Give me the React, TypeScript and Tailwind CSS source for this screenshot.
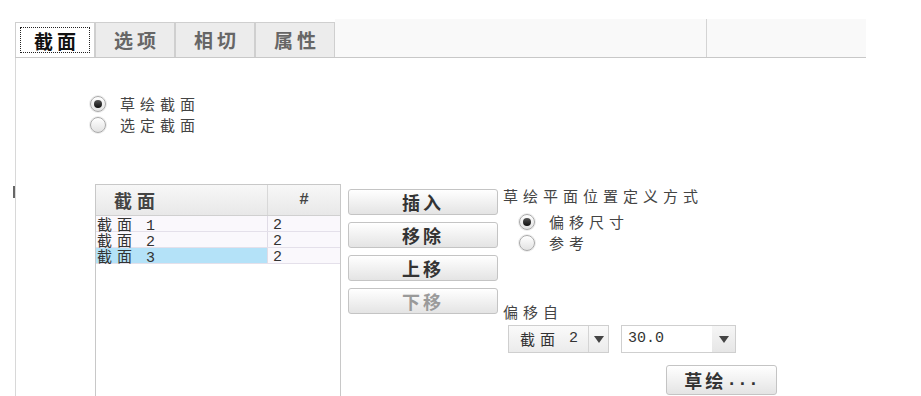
import React from "react";

const CJK = "font-['Noto_Sans_CJK_SC',sans-serif]";
const MONO = "font-['Liberation_Mono',monospace]";

// splits text into Chinese runs (spaced wide like the bitmap font) and latin runs
function T({ text, gap = "tracking-[4px]" }: { text: string; gap?: string }) {
  const parts = text.split(/([\u4e00-\u9fff]+)/).filter(Boolean);
  return (
    <>
      {parts.map((p, i) =>
        /[\u4e00-\u9fff]/.test(p) ? (
          <span key={i} className={`${CJK} ${gap}`}>
            {p}
          </span>
        ) : (
          <span key={i} className={`${MONO} whitespace-pre`}>
            {p}
          </span>
        )
      )}
    </>
  );
}

function Radio({ checked, label }: { checked?: boolean; label: string }) {
  return (
    <div className="flex h-[21px] items-center">
      <span className="flex h-[16px] w-[16px] items-center justify-center rounded-full border border-[#a9a9a9] bg-gradient-to-b from-[#ffffff] to-[#e2e2e2] shadow-[0_0_0_1px_#ececec]">
        {checked && <span className="h-[8px] w-[8px] rounded-full bg-gradient-to-b from-[#555] to-[#111]" />}
      </span>
      <span className="ml-[14px] text-[15px] leading-[18px] text-[#444]">
        <T text={label} gap="tracking-[5px]" />
      </span>
    </div>
  );
}

function Button({
  label,
  disabled,
  className = "",
}: {
  label: string;
  disabled?: boolean;
  className?: string;
}) {
  return (
    <button
      type="button"
      className={`flex items-center justify-center rounded-[3px] border border-[#c4c4c4] bg-gradient-to-b from-[#ffffff] to-[#e4e4e4] text-[18px] font-bold leading-none ${
        disabled ? "text-[#9a9a9a]" : "text-[#333]"
      } ${className}`}
    >
      <T text={label} gap="tracking-[3px]" />
    </button>
  );
}

function Arrow() {
  return (
    <svg width="10" height="7" viewBox="0 0 10 7">
      <path d="M0 0h10L5 7z" fill="#444" />
    </svg>
  );
}

const tabs = ["截面", "选项", "相切", "属性"];

const rows = [
  { name: "截面 1", n: "2" },
  { name: "截面 2", n: "2" },
  { name: "截面 3", n: "2", selected: true },
];

export default function App() {
  return (
    <div className="relative h-[396px] w-[921px] overflow-hidden bg-white">
      {/* tab strip */}
      <div className="ml-[15px] mt-[20px] flex h-[38px] w-[851px] items-end border-b border-[#c8c8c8]">
        {tabs.map((t, i) => (
          <div
            key={t}
            className={`flex h-[35px] w-[80px] items-center justify-center border border-b-0 border-[#cfcfcf] ${
              i === 0 ? "bg-white" : "bg-[#ececec]"
            }`}
          >
            {i === 0 ? (
              <span className="flex h-[26px] w-[70px] items-center justify-center border border-dotted border-[#222] pl-[4px] text-[19px] font-bold leading-none text-[#111]">
                <T text={t} gap="tracking-[4px]" />
              </span>
            ) : (
              <span className="pl-[4px] text-[19px] font-bold leading-none text-[#666]">
                <T text={t} gap="tracking-[4px]" />
              </span>
            )}
          </div>
        ))}
        <div className="h-[38px] w-[372px] border-r border-[#d4d4d4] bg-[#f9f9f9]" />
        <div className="h-[38px] flex-1 bg-[#f9f9f9]" />
      </div>

      {/* body */}
      <div className="ml-[15px] h-[340px] border-l border-[#d8d8d8]">
        <div className="ml-[74px] pt-[35px]">
          <Radio checked label="草绘截面" />
          <Radio label="选定截面" />
        </div>

        <div className="ml-[79px] mt-[49px] flex">
          {/* section table */}
          <div className="h-[220px] w-[246px] border border-[#c8c8c8] bg-white">
            <div className="flex h-[31px] border-b border-[#d0d0d0] bg-gradient-to-b from-[#f7f7f7] to-[#e8e8e8] text-[18px] font-bold leading-none text-[#444]">
              <div className="flex w-[171px] items-center pl-[18px]">
                <T text="截面" gap="tracking-[5px]" />
              </div>
              <div className="flex flex-1 items-center justify-center border-l border-[#d8d8d8] text-[16px]">
                <T text="#" />
              </div>
            </div>
            {rows.map((r) => (
              <div
                key={r.name}
                className="flex h-[16px] border-b border-[#e4e0ea] bg-[#faf8fc] text-[15px] leading-[15px] text-[#333]"
              >
                <div className={`w-[171px] pl-[1px] ${r.selected ? "bg-[#b4e2f8]" : ""}`}>
                  <T text={r.name} gap="tracking-[5px]" />
                </div>
                <div className="flex-1 border-l border-[#e0dce6] pl-[5px]">
                  <T text={r.n} />
                </div>
              </div>
            ))}
          </div>

          {/* buttons */}
          <div className="ml-[7px] mt-[5px] flex w-[150px] flex-col gap-[7px]">
            <Button label="插入" className="h-[26px]" />
            <Button label="移除" className="h-[26px]" />
            <Button label="上移" className="h-[26px]" />
            <Button label="下移" disabled className="h-[26px]" />
          </div>

          {/* placement */}
          <div className="ml-[5px] mt-[3px] flex flex-col">
            <div className="text-[15px] leading-[18px] text-[#444]">
              <T text="草绘平面位置定义方式" gap="tracking-[5px]" />
            </div>
            <div className="ml-[16px] mt-[6px]">
              <Radio checked label="偏移尺寸" />
              <Radio label="参考" />
            </div>
            <div className="mt-[50px] text-[15px] leading-[18px] text-[#444]">
              <T text="偏移自" gap="tracking-[5px]" />
            </div>
            <div className="ml-[5px] mt-[4px] flex gap-[12px]">
              <div className="flex h-[28px] w-[101px] border border-[#cfcfcf] bg-gradient-to-b from-[#fafafa] to-[#ebebeb]">
                <div className="flex flex-1 items-center pl-[11px] text-[15px] text-[#333]">
                  <T text="截面 2" gap="tracking-[5px]" />
                </div>
                <div className="flex w-[20px] items-center justify-center border-l border-[#d4d4d4]">
                  <Arrow />
                </div>
              </div>
              <div className="flex h-[28px] w-[115px] border border-[#cfcfcf] bg-white">
                <div className="flex flex-1 items-center pl-[6px] text-[15px] text-[#333]">
                  <T text="30.0" />
                </div>
                <div className="flex w-[23px] items-center justify-center bg-gradient-to-b from-[#f6f6f6] to-[#e6e6e6]">
                  <Arrow />
                </div>
              </div>
            </div>
            <div className="mt-[12px] flex">
              <Button label="草绘..." className="ml-[163px] h-[30px] w-[111px]" />
            </div>
          </div>
        </div>
      </div>

      {/* stray tick on the left edge */}
      <div className="absolute left-[13px] top-[186px] h-[12px] w-[2px] bg-[#666]" />
    </div>
  );
}
